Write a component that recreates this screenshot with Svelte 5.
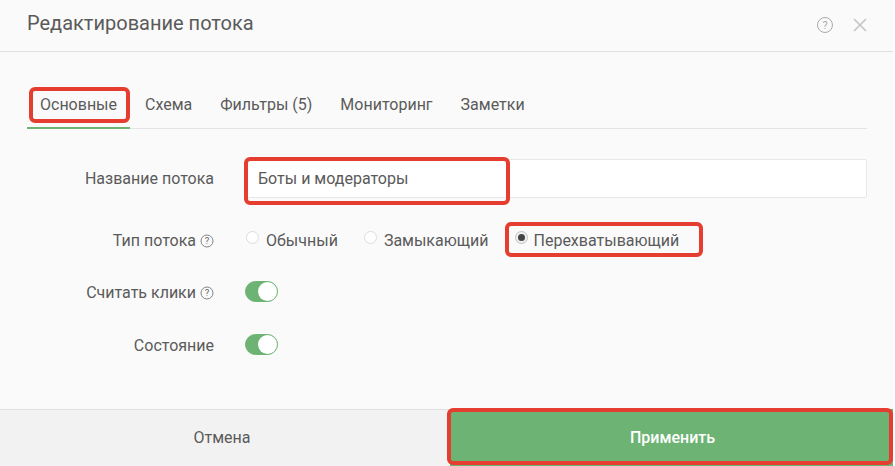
<div class="modal">
  <header class="head">
    <h1>Редактирование потока</h1>
    <div class="head-icons">
      <svg class="help-big" viewBox="0 0 18 18" aria-hidden="true">
        <circle cx="9" cy="9" r="7.5" />
        <text x="9" y="12.6" text-anchor="middle">?</text>
      </svg>
      <svg class="close" viewBox="0 0 14 14" aria-hidden="true"><path d="M1 1 L13 13 M13 1 L1 13" /></svg>
    </div>
  </header>

  <main class="body">
    <nav class="tabs">
      {#each tabs as tab, i}
        <span class="tab" class:active={i === 0}>{tab}</span>
      {/each}
    </nav>

    <div class="row row-name">
      <span class="label">Название потока</span>
      <div class="input">Боты и модераторы</div>
    </div>

    <div class="row row-type">
      <span class="label">Тип потока {@render help()}</span>
      <div class="radios">
        {#each types as type, i}
          <span class="radio-item">
            <span class="radio" class:checked={i === 2}></span>
            <span>{type}</span>
          </span>
        {/each}
      </div>
    </div>

    <div class="row row-clicks">
      <span class="label">Считать клики {@render help()}</span>
      <span class="toggle"><span class="knob"></span></span>
    </div>

    <div class="row row-state">
      <span class="label">Состояние</span>
      <span class="toggle"><span class="knob"></span></span>
    </div>
  </main>

  <footer class="foot">
    <div class="cancel">Отмена</div>
    <div class="apply">Применить</div>
  </footer>

  <div class="mark mark-tab"></div>
  <div class="mark mark-name"></div>
  <div class="mark mark-radio"></div>
  <div class="mark mark-apply"></div>
</div>

{#snippet help()}
  <svg class="help" viewBox="0 0 14 14" aria-hidden="true">
    <circle cx="7" cy="7" r="6" />
    <text x="7" y="10.2" text-anchor="middle">?</text>
  </svg>
{/snippet}

<script>
  const tabs = ['Основные', 'Схема', 'Фильтры (5)', 'Мониторинг', 'Заметки'];
  const types = ['Обычный', 'Замыкающий', 'Перехватывающий'];
</script>

<style>
  :global(body) {
    margin: 0;
    background: #fff;
  }
  .modal {
    position: relative;
    width: 893px;
    height: 466px;
    display: flex;
    flex-direction: column;
    background: #fafafa;
    font-family: Roboto, sans-serif;
    font-size: 16px;
    color: #5a5a5a;
    overflow: hidden;
  }
  .head {
    flex: none;
    display: flex;
    align-items: center;
    justify-content: space-between;
    padding: 0 26px 0 27px;
    border-bottom: 1px solid #e0e0e0;
    box-sizing: border-box;
    height: 52px;
  }
  h1 {
    margin: 0 0 6px;
    font-size: 20px;
    font-weight: 400;
    color: #5a5a5a;
  }
  .head-icons {
    display: flex;
    align-items: center;
    gap: 19px;
    margin-bottom: 2px;
  }
  .help-big {
    width: 18px;
    height: 18px;
  }
  .help-big circle {
    fill: none;
    stroke: #aaa;
    stroke-width: 1;
  }
  .help-big text {
    font-size: 11px;
    fill: #aaa;
  }
  .close {
    width: 14px;
    height: 14px;
  }
  .close path {
    fill: none;
    stroke: #c4c4c4;
    stroke-width: 1.6;
  }
  .body {
    flex: 1;
    padding: 26px 26px 0 27px;
  }
  .tabs {
    display: flex;
    height: 51px;
    box-sizing: border-box;
    border-bottom: 1px solid #e4e4e4;
  }
  .tab {
    padding: 18px 13px 0;
    margin-right: 2px;
    line-height: 18px;
    height: 51px;
    box-sizing: border-box;
  }
  .tab.active {
    border-bottom: 2px solid #6db373;
  }
  .row {
    display: flex;
    align-items: center;
  }
  .label {
    width: 187px;
    flex: none;
    margin-right: 31px;
    text-align: right;
    display: flex;
    align-items: center;
    justify-content: flex-end;
    gap: 4px;
    white-space: nowrap;
  }
  .row-name {
    margin-top: 30px;
    height: 39px;
  }
  .input {
    flex: 1;
    height: 39px;
    box-sizing: border-box;
    line-height: 37px;
    padding-left: 12px;
    background: #fff;
    border: 1px solid #e8e8e8;
    border-radius: 2px;
  }
  .row-type {
    margin-top: 30px;
    height: 24px;
  }
  .help {
    width: 14px;
    height: 14px;
    flex: none;
    margin-top: 2px;
  }
  .help circle {
    fill: none;
    stroke: #777;
    stroke-width: 0.9;
  }
  .help text {
    font-size: 9.5px;
    fill: #666;
  }
  .radios {
    display: flex;
    align-items: center;
  }
  .radio-item {
    display: flex;
    align-items: center;
    gap: 7px;
    margin-right: 26px;
  }
  .radio-item:first-child {
    margin-left: 1px;
  }
  .radio-item:last-child {
    gap: 6px;
  }
  .radio {
    width: 13px;
    height: 13px;
    box-sizing: border-box;
    border-radius: 50%;
    border: 1px solid #dcdcdc;
    background: #fff;
    margin-top: -6px;
    display: flex;
    align-items: center;
    justify-content: center;
  }
  .radio.checked {
    border-color: #c4c4c4;
    background: #f0f0f0;
  }
  .radio.checked::after {
    content: '';
    width: 7px;
    height: 7px;
    border-radius: 50%;
    background: #444;
  }
  .row-clicks {
    margin-top: 29px;
    height: 22px;
  }
  .row-state {
    margin-top: 31px;
    height: 22px;
  }
  .toggle {
    width: 33px;
    height: 21px;
    box-sizing: border-box;
    border-radius: 11px;
    background: #6db373;
    display: flex;
    justify-content: flex-end;
    margin-top: -2px;
    border: 1px solid #6db373;
  }
  .knob {
    width: 19px;
    height: 19px;
    border-radius: 50%;
    background: #fff;
  }
  .foot {
    height: 57px;
    flex: none;
    display: flex;
  }
  .cancel {
    width: 450px;
    flex: none;
    background: #f2f2f2;
    border-top: 1px solid #e0e0e0;
    box-sizing: border-box;
    display: flex;
    align-items: center;
    justify-content: center;
    padding: 0 6px 1px 0;
  }
  .apply {
    flex: 1;
    background: #6db373;
    color: #fff;
    font-weight: 500;
    display: flex;
    align-items: center;
    justify-content: center;
    padding-left: 2px;
  }
  .mark {
    position: absolute;
    box-sizing: border-box;
    border: 4px solid #e53d30;
    border-radius: 6px;
    pointer-events: none;
  }
  .mark-tab { left: 29px; top: 87px; width: 101px; height: 36px; }
  .mark-name { left: 244px; top: 157px; width: 266px; height: 48px; }
  .mark-radio { left: 505px; top: 222px; width: 198px; height: 35px; }
  .mark-apply { left: 447px; top: 408px; width: 446px; height: 57px; }
</style>
